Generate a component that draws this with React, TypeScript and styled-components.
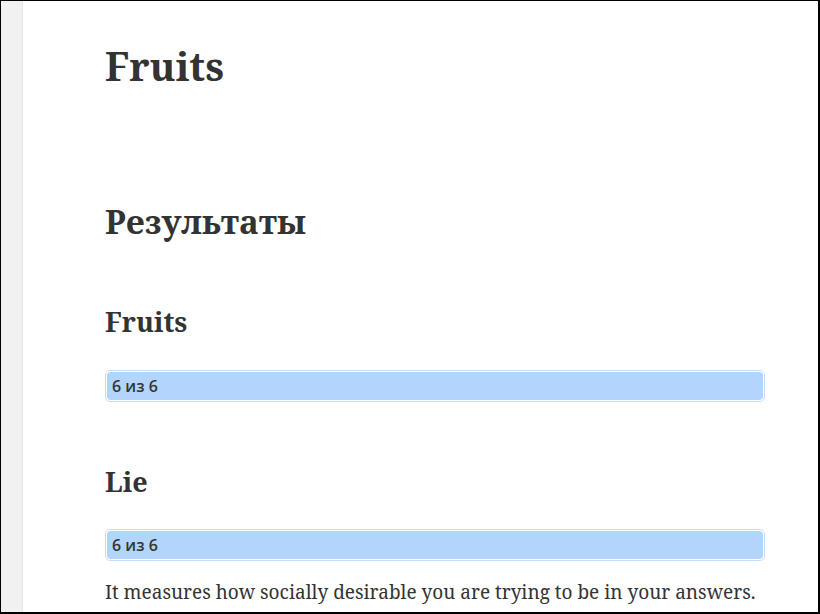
import styled, { createGlobalStyle } from 'styled-components';

const GlobalStyle = createGlobalStyle`
  html, body {
    margin: 0;
    padding: 0;
    background: #ffffff;
  }
  * {
    box-sizing: border-box;
  }
`;

const Frame = styled.div`
  width: 820px;
  height: 614px;
  border-style: solid;
  border-color: #000000;
  border-width: 1px 2px 2px 1px;
  display: flex;
  overflow: hidden;
  background: #ffffff;
`;

const Sidebar = styled.aside`
  width: 22px;
  flex-shrink: 0;
  background: #f1f1f1;
  border-right: 1px solid #e4e4e4;
`;

const Main = styled.main`
  flex: 1;
  padding: 42px 0 0 82px;
  color: #333333;
  font-family: 'Noto Serif', 'DejaVu Serif', serif;
`;

const Content = styled.div`
  width: 660px;
`;

const Title = styled.h1`
  font-size: 39px;
  font-weight: 700;
  line-height: 1.2;
  margin: 0;
`;

const SectionTitle = styled.h2`
  font-size: 33px;
  font-weight: 700;
  line-height: 1.2;
  margin: 112px 0 0;
  padding-bottom: 1px;
`;

const ScaleTitle = styled.h3`
  font-size: 27px;
  font-weight: 700;
  line-height: 1.2;
  margin: 64px 0 0;
`;

const Bar = styled.div`
  margin-top: 31px;
  border: 1px solid #c6ddfa;
  border-radius: 5px;
  padding: 1px;
  background: #ffffff;
`;

const BarFill = styled.div<{ $percent: number }>`
  height: 28px;
  width: ${(p) => p.$percent}%;
  background: #b3d4fc;
  border-radius: 4px;
  padding-left: 5px;
  display: flex;
  align-items: center;
  font-family: 'Open Sans', 'Noto Sans', sans-serif;
  font-weight: 600;
  font-size: 16px;
  color: #333333;
  white-space: nowrap;
`;

const Description = styled.p`
  font-size: 19px;
  line-height: 1.5;
  margin: 17px 0 0;
`;

const scales = [
  { name: 'Fruits', score: 6, max: 6, text: '' },
  { name: 'Lie', score: 6, max: 6, text: 'It measures how socially desirable you are trying to be in your answers.' },
];

export default function App() {
  return (
    <>
      <GlobalStyle />
      <Frame>
        <Sidebar />
        <Main>
          <Content>
            <Title>Fruits</Title>
            <SectionTitle>Результаты</SectionTitle>
            {scales.map((s) => (
              <div key={s.name}>
                <ScaleTitle>{s.name}</ScaleTitle>
                <Bar>
                  <BarFill $percent={(s.score / s.max) * 100}>
                    {s.score} из {s.max}
                  </BarFill>
                </Bar>
                {s.text && <Description>{s.text}</Description>}
              </div>
            ))}
          </Content>
        </Main>
      </Frame>
    </>
  );
}
